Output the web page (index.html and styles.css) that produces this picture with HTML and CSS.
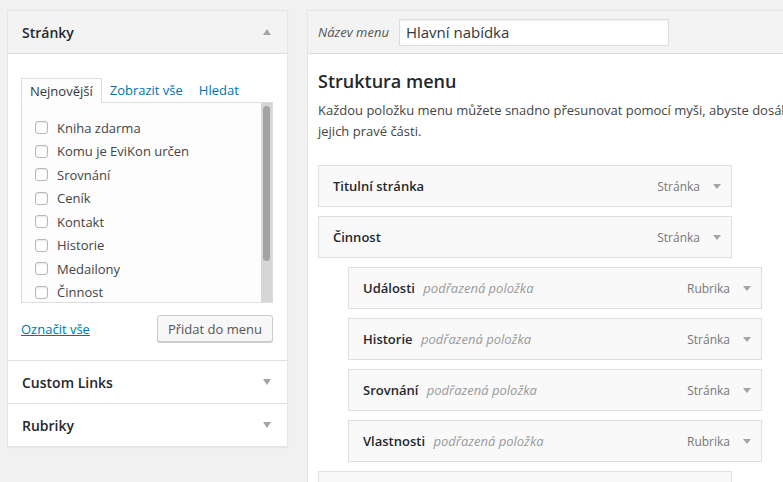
FILE: index.html
```html
<!DOCTYPE html>
<html>
<head>
<meta charset="utf-8">
<title>Menu</title>
<link rel="stylesheet" href="styles.css">
</head>
<body>
<div class="page">
  <div class="side">
    <div class="section open">
      <div class="section-title">Stránky <span class="arrow up"></span></div>
      <div class="section-body">
        <div class="tabs">
          <span class="tab active">Nejnovější</span>
          <span class="tab">Zobrazit vše</span>
          <span class="tab">Hledat</span>
        </div>
        <div class="tab-panel">
          <ul class="checklist">
            <li><span class="cb"></span>Kniha zdarma</li>
            <li><span class="cb"></span>Komu je EviKon určen</li>
            <li><span class="cb"></span>Srovnání</li>
            <li><span class="cb"></span>Ceník</li>
            <li><span class="cb"></span>Kontakt</li>
            <li><span class="cb"></span>Historie</li>
            <li><span class="cb"></span>Medailony</li>
            <li><span class="cb"></span>Činnost</li>
            <li><span class="cb"></span>Vlastnosti</li>
          </ul>
          <div class="scrollbar"><div class="thumb"></div></div>
        </div>
        <div class="actions">
          <a class="select-all">Označit vše</a>
          <button class="btn">Přidat do menu</button>
        </div>
      </div>
    </div>
    <div class="section">
      <div class="section-title">Custom Links <span class="arrow"></span></div>
    </div>
    <div class="section">
      <div class="section-title">Rubriky <span class="arrow"></span></div>
    </div>
  </div>

  <div class="main">
    <div class="main-header">
      <label class="name-label">Název menu</label>
      <div class="name-input">Hlavní nabídka</div>
    </div>
    <div class="main-body">
      <h3>Struktura menu</h3>
      <p class="desc">Každou položku menu můžete snadno přesunovat pomocí myši, abyste dosáhli požadovaného pořadí. Kliknutím na šipku vpravo od<br>jejich pravé části.</p>
      <div class="items">
        <div class="item"><span class="item-title">Titulní stránka</span><span class="item-type">Stránka</span><span class="arrow"></span></div>
        <div class="item"><span class="item-title">Činnost</span><span class="item-type">Stránka</span><span class="arrow"></span></div>
        <div class="item sub"><span class="item-title">Události <em>podřazená položka</em></span><span class="item-type">Rubrika</span><span class="arrow"></span></div>
        <div class="item sub"><span class="item-title">Historie <em>podřazená položka</em></span><span class="item-type">Stránka</span><span class="arrow"></span></div>
        <div class="item sub"><span class="item-title">Srovnání <em>podřazená položka</em></span><span class="item-type">Stránka</span><span class="arrow"></span></div>
        <div class="item sub"><span class="item-title">Vlastnosti <em>podřazená položka</em></span><span class="item-type">Rubrika</span><span class="arrow"></span></div>
        <div class="item"><span class="item-title">Kontakt</span><span class="item-type">Stránka</span><span class="arrow"></span></div>
      </div>
    </div>
  </div>
</div>
</body>
</html>
```

FILE: styles.css
```css
html, body {
  margin: 0;
  overflow: hidden;
}

body {
  background: #f1f1f1;
  font-family: "Open Sans", "Liberation Sans", sans-serif;
  font-size: 13px;
  color: #444;
  height: 482px;
}

.page {
  display: flex;
  align-items: flex-start;
  padding: 10px 0 0 7px;
}

/* left column */
.side {
  flex: 0 0 281px;
  box-sizing: border-box;
  background: #fff;
  border: 1px solid #e5e5e5;
  box-shadow: 0 1px 1px rgba(0,0,0,.04);
}

.section + .section {
  border-top: 1px solid #dfdfdf;
}

.section-title {
  display: flex;
  align-items: center;
  justify-content: space-between;
  height: 42px;
  padding: 0 14px 0 14px;
  font-size: 14px;
  font-weight: 600;
  color: #23282d;
}

.section.open .section-title {
  background: #f3f3f3;
  border-bottom: 1px solid #dfdfdf;
}

.arrow {
  width: 0;
  height: 0;
  border-left: 4px solid transparent;
  border-right: 4px solid transparent;
  border-top: 6px solid #a0a5aa;
  margin-right: 2px;
}

.arrow.up {
  border-top: 0;
  border-bottom: 6px solid #a0a5aa;
}

.section-body {
  padding: 24px 14px 18px 13px;
}

.tabs {
  display: flex;
  height: 25px;
  line-height: 25px;
}

.tab {
  padding: 0 8px;
  color: #0073aa;
}

.tab.active {
  color: #32373c;
  border: 1px solid #dddddd;
  border-bottom: 1px solid #fdfdfd;
  background: #fdfdfd;
  line-height: 25px;
  position: relative;
  z-index: 1;
}

.tab-panel {
  display: flex;
  height: 199px;
  border: 1px solid #dddddd;
  background: #fdfdfd;
  overflow: hidden;
  margin-top: -1px;
}

.checklist {
  flex: 1;
  list-style: none;
  margin: 0;
  padding: 13px 0 0 13px;
}

.checklist li {
  display: flex;
  align-items: center;
  height: 23.5px;
  color: #444;
}

.cb {
  width: 11px;
  height: 11px;
  border: 1px solid #b4b9be;
  border-radius: 3px;
  background: #fff;
  box-shadow: inset 0 1px 2px rgba(0,0,0,.1);
  margin-right: 9px;
}

.scrollbar {
  flex: 0 0 11px;
  background: #d6d6d6;
}

.thumb {
  margin: 3px 2px 0 2px;
  height: 155px;
  border-radius: 4px;
  background: #a3a3a3;
}

.actions {
  display: flex;
  justify-content: space-between;
  align-items: center;
  margin-top: 12px;
}

.select-all {
  color: #0073aa;
  text-decoration: underline;
}

.btn {
  height: 27px;
  padding: 0 10px;
  font-family: inherit;
  font-size: 13px;
  color: #555;
  background: #f7f7f7;
  border: 1px solid #cccccc;
  border-radius: 3px;
  box-shadow: 0 1px 0 #cccccc;
}

/* right column */
.main {
  flex: 0 0 560px;
  margin-left: 19px;
  background: #fff;
  border: 1px solid #e5e5e5;
}

.main-header {
  display: flex;
  align-items: center;
  height: 42px;
  padding: 0 10px;
  background: #f3f3f3;
  border-bottom: 1px solid #dddddd;
}

.name-label {
  font-style: italic;
  color: #555;
  margin-right: 10px;
}

.name-input {
  box-sizing: border-box;
  width: 270px;
  height: 27px;
  line-height: 25px;
  padding: 0 6px;
  background: #fff;
  border: 1px solid #dddddd;
  box-shadow: inset 0 1px 2px rgba(0,0,0,.07);
  font-size: 15px;
  color: #32373c;
}

.main-body {
  padding: 15px 10px 0 10px;
}

h3 {
  margin: 0 0 7px 0;
  font-size: 18px;
  font-weight: 600;
  line-height: 24px;
  color: #23282d;
}

.desc {
  margin: 0 0 23px 0;
  line-height: 21px;
  white-space: nowrap;
  color: #444;
}

.item {
  box-sizing: border-box;
  display: flex;
  align-items: center;
  width: 414px;
  height: 42px;
  margin-bottom: 9px;
  padding: 0 10px 0 14px;
  background: #f9f9f9;
  border: 1px solid #dfdfdf;
}

.item.sub {
  margin-left: 30px;
}

.item-title {
  flex: 1;
  font-weight: 600;
  color: #23282d;
}

.item-title em {
  font-weight: 400;
  color: #999;
  margin-left: 5px;
}

.item-type {
  font-size: 12px;
  color: #777;
  margin-right: 13px;
}

.item .arrow {
  margin-right: 0;
  border-top-width: 5px;
}
```
